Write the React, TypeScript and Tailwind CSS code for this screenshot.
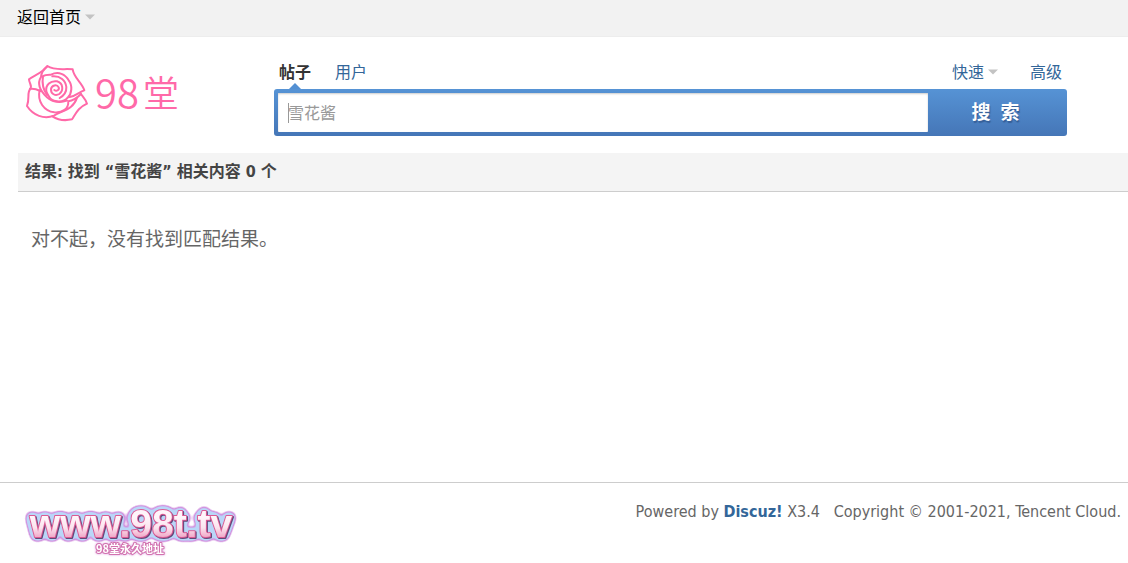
import React, { useState } from "react";

function Caret() {
  return (
    <svg width="10" height="6" viewBox="0 0 10 6" aria-hidden="true">
      <path d="M0 0.5H10L5 5.5Z" fill="#c3c3c3" />
    </svg>
  );
}

function RoseLogo() {
  return (
    <svg width="80" height="75" viewBox="0 0 240 225" fill="none" stroke="#ff69a8" strokeWidth="6" strokeLinecap="round" strokeLinejoin="round" aria-hidden="true">
      {/* outer petals */}
      <path d="M45 102C54 93 42 86 42 73C58 61 82 54 97 33C119 48 147 40 173 43C177 70 201 82 208 106C192 111 187 121 164 126" />
      <path d="M46 102C35 113 45 128 36 153C54 181 87 194 117 182C143 166 175 164 186 128" />
      <path d="M112 184C129 195 149 198 171 193C185 171 190 158 216 146C212 132 202 123 198 117" />
      {/* folds */}
      <path d="M97 34C83 44 79 55 78 66C65 87 78 110 96 127C114 144 139 143 156 137" />
      <path d="M45 102C56 100 65 103 76 108" />
      <path d="M74 106C66 139 87 168 118 172C143 174 161 161 160 139C174 137 187 128 198 117" />
      <path d="M84 64C91 58 101 59 108 59C131 48 151 58 161 76C173 91 171 116 158 128C145 145 116 140 107 132" />
      {/* heart */}
      <path d="M118 105C125 111 134 104 131 97C126 87 110 90 108 102C107 117 121 124 133 117C147 106 144 84 126 79C107 76 91 89 94 109C96 117 101 122 107 132" />
      <path d="M84 64C80 88 86 106 96 120M112 64C136 62 152 76 154 96C155 112 146 122 134 129" />
    </svg>
  );
}

function FooterLogo() {
  return (
    <svg width="218" height="60" viewBox="0 0 218 60" role="img" aria-label="www.98t.tv 98堂永久地址">
      <defs>
        <linearGradient id="candy" x1="0" y1="0" x2="0" y2="1">
          <stop offset="0.35" stopColor="#fff5fa" />
          <stop offset="0.6" stopColor="#fbe4ee" />
          <stop offset="0.85" stopColor="#ef9fc3" />
        </linearGradient>
        {/* lilac rim, blue band, then a dark pink edge under the letters */}
        <filter id="sticker" filterUnits="userSpaceOnUse" x="0" y="0" width="218" height="60" colorInterpolationFilters="sRGB">
          <feGaussianBlur in="SourceAlpha" stdDeviation="3" result="soft" />
          <feComponentTransfer in="soft" result="rim">
            <feFuncA type="linear" slope="14" intercept="-0.7" />
          </feComponentTransfer>
          <feComponentTransfer in="soft" result="band">
            <feFuncA type="linear" slope="12" intercept="-1.6" />
          </feComponentTransfer>
          <feFlood floodColor="#d294e0" />
          <feComposite in2="rim" operator="in" result="rimColor" />
          <feFlood floodColor="#b9d6f8" />
          <feComposite in2="band" operator="in" result="bandColor" />
          <feOffset in="SourceAlpha" dx="1" dy="1" result="shift" />
          <feFlood floodColor="#604878" />
          <feComposite in2="shift" operator="in" result="shadowColor" />
          <feMerge>
            <feMergeNode in="rimColor" />
            <feMergeNode in="bandColor" />
            <feMergeNode in="shadowColor" />
            <feMergeNode in="SourceGraphic" />
          </feMerge>
        </filter>
        <filter id="glow" filterUnits="userSpaceOnUse" x="0" y="0" width="218" height="60" colorInterpolationFilters="sRGB">
          <feDropShadow dx="0" dy="0" stdDeviation="1" floodColor="#dc9ce0" />
        </filter>
      </defs>
      <text
        x="109" y="38" fontSize="39" textAnchor="middle" strokeLinejoin="round"
        fill="url(#candy)" stroke="#dc5a94" strokeWidth="2" paintOrder="stroke" filter="url(#sticker)"
        className="font-['Liberation_Sans',sans-serif] font-bold"
      >
        www.98t.tv
      </text>
      <text
        x="108" y="54" fontSize="11" textAnchor="middle" strokeLinejoin="round"
        fill="#fff" stroke="#d272ae" strokeWidth="2" paintOrder="stroke" filter="url(#glow)"
        className="font-['Noto_Sans_CJK_SC',sans-serif] font-bold"
      >
        98堂永久地址
      </text>
    </svg>
  );
}

export default function App() {
  const [keyword, setKeyword] = useState("雪花酱");

  return (
    <div className="flex min-h-screen flex-col bg-white font-['Noto_Sans','Noto_Sans_CJK_SC',sans-serif] text-base text-[#666]">

      {/* top bar */}
      <div className="flex h-[37px] items-center border-b border-[#ededed] bg-[#f2f2f2] pb-0.5 pl-[17px]">
        <a href="#" className="flex items-center gap-1 leading-6 text-black">
          返回首页
          <Caret />
        </a>
      </div>

      {/* logo and search */}
      <header className="flex h-[116px] items-start pr-[61px]">
        <a href="#" className="flex w-[274px] shrink-0 items-center pl-[15px] pt-[18px]">
          <RoseLogo />
          <span className="flex items-center gap-1 pb-1 font-['Noto_Sans_CJK_SC',sans-serif] font-[350] leading-[44px] text-[#ff69a8]">
            <span className="text-[40px]">98</span>
            <span className="text-[36px]">堂</span>
          </span>
        </a>
        <form className="flex-1 pt-[23px]" onSubmit={(e) => e.preventDefault()}>
          <div className="flex h-[29px] justify-between px-[5px] leading-6 text-[#369]">
            <div className="flex gap-6">
              <a href="#" className="relative font-bold text-[#333]">
                帖子
                <span className="absolute bottom-0 left-1/2 -translate-x-1/2 border-x-[6px] border-b-[6px] border-x-transparent border-b-[#5390d3]" />
              </a>
              <a href="#">用户</a>
            </div>
            <div className="flex gap-8">
              <a href="#" className="flex h-6 items-center gap-1">
                快速
                <Caret />
              </a>
              <a href="#">高级</a>
            </div>
          </div>
          <div className="relative flex h-[47px] rounded-[3px] bg-linear-to-b from-[#5693d5] to-[#4576b7] py-1 pl-1">
            <input
              type="text"
              aria-label="搜索关键词"
              value={keyword}
              onChange={(e) => setKeyword(e.target.value)}
              className="min-w-0 flex-1 rounded-[1px] bg-white pl-[10px] leading-6 text-[#999] shadow-[inset_0_1px_2px_#ccc] outline-none"
            />
            {/* text cursor */}
            <span className="absolute left-[14px] top-[14px] h-5 w-px bg-[#999]" />
            <button type="submit" className="w-[139px] pr-1 text-[19px] font-bold text-white [text-shadow:1px_2px_1px_#365f98]">
              搜&nbsp; 索
            </button>
          </div>
        </form>
      </header>

      {/* results */}
      <main className="flex-1 pl-[18px]">
        <h2 className="border-b border-[#cdcdcd] bg-[#f4f4f4] pl-[7px] font-['DejaVu_Sans_Condensed','Noto_Sans_CJK_SC',sans-serif] font-bold leading-[38px] text-[#444]">
          结果: 找到 “<em className="not-italic">雪花酱</em>” 相关内容 0 个
        </h2>
        <p className="pl-[13px] pt-8 text-[19px] leading-[30px]">对不起，没有找到匹配结果。</p>
      </main>

      <footer className="flex h-[81px] items-start justify-between border-t border-[#cdcdcd] pl-[22px] pr-[7px] pt-4">
        <FooterLogo />
        <p className="font-['DejaVu_Sans_Condensed',sans-serif] leading-[26px]">
          Powered by <a href="#" className="font-bold text-[#369]">Discuz!</a> X3.4 &nbsp; Copyright © 2001-2021, Tencent Cloud.
        </p>
      </footer>
    </div>
  );
}
